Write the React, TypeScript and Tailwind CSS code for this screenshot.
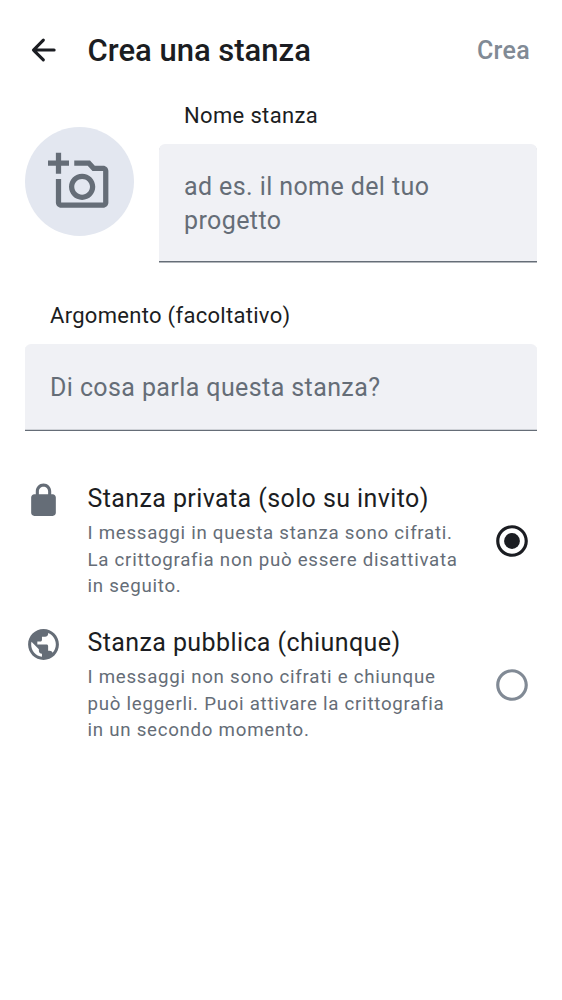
import React from "react";

function Radio({ selected }: { selected: boolean }) {
  return (
    <svg role="radio" aria-checked={selected} viewBox="0 0 24 24" className={selected ? "size-[38px] text-[#1b1d22]" : "size-[38px] text-[#818a95]"} fill="currentColor">
      <path d="M12 2C6.48 2 2 6.48 2 12s4.48 10 10 10 10-4.48 10-10S17.52 2 12 2zm0 18c-4.42 0-8-3.58-8-8s3.58-8 8-8 8 3.58 8 8-3.58 8-8 8z" />
      {selected && <circle cx="12" cy="12" r="5" />}
    </svg>
  );
}

function Option({ icon, title, lines, selected }: { icon: string; title: string; lines: string[]; selected: boolean }) {
  return (
    <div className="flex h-[144px] items-start pl-[25px] pr-[31px]">
      <svg viewBox="0 0 24 24" className="mt-[1.5px] size-[37px] shrink-0 text-[#656d77]" fill="currentColor">
        <path d={icon} />
      </svg>
      <div className="ml-[25.5px] grow">
        <h2 className="text-[25px] leading-[38px] tracking-[0.4px] whitespace-nowrap">{title}</h2>
        <p className="mt-[2px] text-[18.7px] leading-[26.6px] tracking-[0.73px] whitespace-nowrap text-[#656d77]">
          {lines.map((l) => <span key={l} className="block">{l}</span>)}
        </p>
      </div>
      <div className="mt-[41.5px] shrink-0"><Radio selected={selected} /></div>
    </div>
  );
}

const lock = "M18 8h-1V6c0-2.76-2.24-5-5-5S7 3.24 7 6v2H6c-1.1 0-2 .9-2 2v10c0 1.1.9 2 2 2h12c1.1 0 2-.9 2-2V10c0-1.1-.9-2-2-2zM9 6c0-1.66 1.34-3 3-3s3 1.34 3 3v2H9V6z";
const globe = "M12 2C6.48 2 2 6.48 2 12s4.48 10 10 10 10-4.48 10-10S17.52 2 12 2zm-1 17.93c-3.95-.49-7-3.85-7-7.93 0-.62.08-1.21.21-1.79L9 15v1c0 1.1.9 2 2 2v1.93zm6.9-2.54c-.26-.81-1-1.39-1.9-1.39h-1v-3c0-.55-.45-1-1-1H8v-2h2c.55 0 1-.45 1-1V7h2c1.1 0 2-.9 2-2v-.41c2.93 1.19 5 4.06 5 7.41 0 2.08-.8 3.97-2.1 5.39z";

export default function App() {
  return (
    <main className="h-[1000px] w-[562px] overflow-hidden bg-white font-['Roboto','Noto_Sans',sans-serif] text-[#1b1d22]">
      <header className="flex h-[100px] items-center pl-[25px] pr-[32px]">
        <svg viewBox="0 0 24 24" className="size-[37px]" fill="none" stroke="currentColor" strokeWidth="2" strokeLinecap="round" strokeLinejoin="round">
          <path d="M18.9 11.7H5.5M11.9 5.3L5.5 11.7l6.4 6.4" />
        </svg>
        <h1 className="ml-[25.5px] pt-[2px] text-[31px] leading-[38px] font-medium">Crea una stanza</h1>
        <button className="ml-auto pt-[2px] text-[25px] font-medium tracking-[0.3px] text-[#818a95]">Crea</button>
      </header>
      <section className="flex h-[163px] px-[25px]">
        <button aria-label="Foto" className="mt-[27px] flex size-[109px] items-center justify-center rounded-full bg-[#e3e7f0]">
          <svg viewBox="0 0 24 24" className="size-[63px] text-[#656d77]" fill="currentColor">
            <path d="M21 6h-3.17L16 4h-6v2h5.12l1.83 2H21v12H5v-9H3v9c0 1.1.9 2 2 2h16c1.1 0 2-.9 2-2V8c0-1.1-.9-2-2-2zM8 14c0 2.76 2.24 5 5 5s5-2.24 5-5-2.24-5-5-5-5 2.24-5 5zm5-3c1.65 0 3 1.35 3 3s-1.35 3-3 3-3-1.35-3-3 1.35-3 3-3zM5 6h3V4H5V1H3v3H0v2h3v3h2z" />
          </svg>
        </button>
        <div className="ml-[25px] w-[378px]">
          <h2 className="h-[44px] pl-[25px] text-[22px] leading-[32px] tracking-[0.35px]">Nome stanza</h2>
          <div className="h-[118px] rounded-t-[6px] border-b border-[#656d77] bg-[#f0f1f5] pt-[25.5px] pl-[25px] text-[25px] leading-[34.3px] tracking-[0.4px] text-[#656d77] shadow-[0_1px_0_#b2b6bb]">
            ad es. il nome del tuo<br />progetto
          </div>
        </div>
      </section>
      <section className="mt-[37px] px-[25px]">
        <h2 className="h-[44px] pl-[25px] text-[22px] leading-[32px] tracking-[0.3px]">Argomento (facoltativo)</h2>
        <div className="h-[87px] rounded-t-[6px] border-b border-[#656d77] bg-[#f0f1f5] pt-[26.5px] pl-[25px] text-[25px] leading-[34.3px] tracking-[0.4px] text-[#656d77] shadow-[inset_0_-1px_0_#cfd2d7]">
          Di cosa parla questa stanza?
        </div>
      </section>
      <section className="mt-[49px]">
        <Option icon={lock} title="Stanza privata (solo su invito)" lines={["I messaggi in questa stanza sono cifrati.", "La crittografia non può essere disattivata", "in seguito."]} selected />
        <Option icon={globe} title="Stanza pubblica (chiunque)" lines={["I messaggi non sono cifrati e chiunque", "può leggerli. Puoi attivare la crittografia", "in un secondo momento."]} selected={false} />
      </section>
    </main>
  );
}
